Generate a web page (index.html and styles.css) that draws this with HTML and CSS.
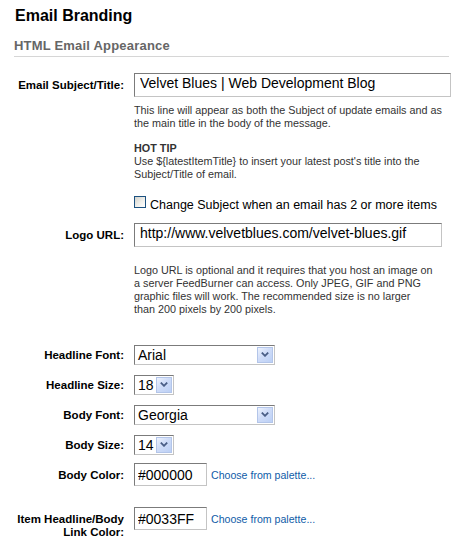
FILE: index.html
```html
<!DOCTYPE html>
<html lang="en">
<head>
<meta charset="utf-8">
<title>Email Branding</title>
<link rel="stylesheet" href="styles.css">
</head>
<body>
<div class="page">
  <h1 class="title">Email Branding</h1>
  <h2 class="section">HTML Email Appearance</h2>

  <div class="row row-subject">
    <label class="label pad-input">Email Subject/Title:</label>
    <div class="field">
      <input class="text w-subject" type="text" value="Velvet Blues | Web Development Blog">
      <p class="help help-subject">This line will appear as both the Subject of update emails and as the main title in the body of the message.</p>
      <p class="help tip"><strong>HOT TIP</strong><br>Use ${latestItemTitle} to insert your latest post's title into the Subject/Title of email.</p>
      <div class="check">
        <input class="box" type="checkbox">
        <span class="check-label">Change Subject when an email has 2 or more items</span>
      </div>
    </div>
  </div>

  <div class="row row-logo">
    <label class="label pad-input">Logo URL:</label>
    <div class="field">
      <input class="text w-logo" type="text" value="http://www.velvetblues.com/velvet-blues.gif">
      <p class="help help-logo">Logo URL is optional and it requires that you host an image on a server FeedBurner can access. Only JPEG, GIF and PNG graphic files will work. The recommended size is no larger than 200 pixels by 200 pixels.</p>
    </div>
  </div>

  <div class="row row-first-select">
    <label class="label pad-select">Headline Font:</label>
    <div class="field">
      <div class="select select-font">
        <span class="select-value">Arial</span>
        <span class="select-btn"><svg width="8" height="5" viewBox="0 0 8 5"><polyline points="0.8,0.6 4,3.8 7.2,0.6" fill="none" stroke="#4a5e86" stroke-width="1.8"/></svg></span>
      </div>
    </div>
  </div>

  <div class="row row-select">
    <label class="label pad-select">Headline Size:</label>
    <div class="field">
      <div class="select select-size">
        <span class="select-value">18</span>
        <span class="select-btn"><svg width="8" height="5" viewBox="0 0 8 5"><polyline points="0.8,0.6 4,3.8 7.2,0.6" fill="none" stroke="#4a5e86" stroke-width="1.8"/></svg></span>
      </div>
    </div>
  </div>

  <div class="row row-select">
    <label class="label pad-select">Body Font:</label>
    <div class="field">
      <div class="select select-font">
        <span class="select-value">Georgia</span>
        <span class="select-btn"><svg width="8" height="5" viewBox="0 0 8 5"><polyline points="0.8,0.6 4,3.8 7.2,0.6" fill="none" stroke="#4a5e86" stroke-width="1.8"/></svg></span>
      </div>
    </div>
  </div>

  <div class="row row-select">
    <label class="label pad-select">Body Size:</label>
    <div class="field">
      <div class="select select-size">
        <span class="select-value">14</span>
        <span class="select-btn"><svg width="8" height="5" viewBox="0 0 8 5"><polyline points="0.8,0.6 4,3.8 7.2,0.6" fill="none" stroke="#4a5e86" stroke-width="1.8"/></svg></span>
      </div>
    </div>
  </div>

  <div class="row row-color">
    <label class="label pad-color">Body Color:</label>
    <div class="field field-inline">
      <input class="text color-input" type="text" value="#000000">
      <a class="palette" href="#">Choose from palette...</a>
    </div>
  </div>

  <div class="row row-link-color">
    <label class="label two-line">Item Headline/Body<br>Link Color:</label>
    <div class="field field-inline">
      <input class="text color-input" type="text" value="#0033FF">
      <a class="palette" href="#">Choose from palette...</a>
    </div>
  </div>
</div>
</body>
</html>
```

FILE: styles.css
```css
* {
  box-sizing: border-box;
}

body {
  margin: 0;
  background: #fff;
  color: #000;
  font-family: "Liberation Sans", Arial, sans-serif;
}

.page {
  width: 449px;
  padding: 6px 0 0 14px;
}

.title {
  margin: 0;
  padding-left: 1px;
  font-size: 16px;
  line-height: 20px;
  font-weight: bold;
  color: #000;
}

.section {
  margin: 12px 0 0;
  padding-bottom: 2px;
  font-size: 13px;
  line-height: 16px;
  font-weight: bold;
  letter-spacing: 0.2px;
  color: #666;
  border-bottom: 1px solid #d6d6d6;
}

.row {
  display: grid;
  grid-template-columns: 110px 1fr;
  column-gap: 10px;
  align-items: start;
}

.row-subject { margin-top: 16px; }
.row-logo { margin-top: 10px; }
.row-first-select { margin-top: 29px; }
.row-select { margin-top: 10px; }
.row-color { margin-top: 8.5px; }
.row-link-color { margin-top: 21px; }

.label {
  text-align: right;
  font-size: 11.5px;
  line-height: 14px;
  font-weight: bold;
  color: #000;
}

.pad-input { padding-top: 5px; }
.pad-select { padding-top: 3px; }
.pad-color { padding-top: 4.5px; }
.two-line { padding-top: 5.5px; line-height: 13px; }

.text {
  display: block;
  margin: 0;
  height: 24px;
  padding: 0 5px 4px;
  border: 1px solid;
  border-color: #7b7b7b #c4c4c4 #c4c4c4 #7b7b7b;
  background: #fff;
  color: #000;
  font: 14px "Liberation Sans", Arial, sans-serif;
  outline: none;
}

.w-subject { width: 317px; }
.w-logo { width: 308px; }

.color-input {
  width: 73px;
  height: 23px;
  padding: 0 3px;
}

.help {
  margin: 0;
  font-size: 10.8px;
  line-height: 13px;
  color: #333;
}

.help-subject { margin-top: 7px; width: 317px; }
.tip { margin-top: 12px; width: 317px; }
.help-logo { margin-top: 16.5px; width: 300px; }

.check {
  display: flex;
  align-items: flex-start;
  margin-top: 15px;
}

.box {
  appearance: none;
  -webkit-appearance: none;
  margin: 0;
  width: 12px;
  height: 12px;
  border: 1px solid #1c5180;
  background: linear-gradient(135deg, #d2d2cc 0%, #efefeb 55%, #fff 100%);
}

.check-label {
  margin-left: 4px;
  padding-top: 1px;
  font-size: 12.5px;
  line-height: 16px;
  color: #000;
}

.select {
  display: flex;
  height: 20px;
  padding: 1px;
  border: 1px solid;
  border-color: #7b7b7b #c4c4c4 #c4c4c4 #7b7b7b;
  background: #fff;
}

.select-font { width: 141px; }
.select-size { width: 40px; }

.select-value {
  flex: 1;
  padding-left: 2px;
  font-size: 14px;
  line-height: 16px;
  color: #000;
}

.select-btn {
  width: 16px;
  display: flex;
  align-items: center;
  justify-content: center;
  border: 1px solid #b3c5e9;
  background: linear-gradient(135deg, #eef3fd 0%, #cfdcf8 45%, #bcd0f5 100%);
}

.field-inline {
  display: flex;
  align-items: center;
}

.palette {
  margin-left: 4px;
  font-size: 10.6px;
  color: #0f5ca8;
  text-decoration: none;
}
```
